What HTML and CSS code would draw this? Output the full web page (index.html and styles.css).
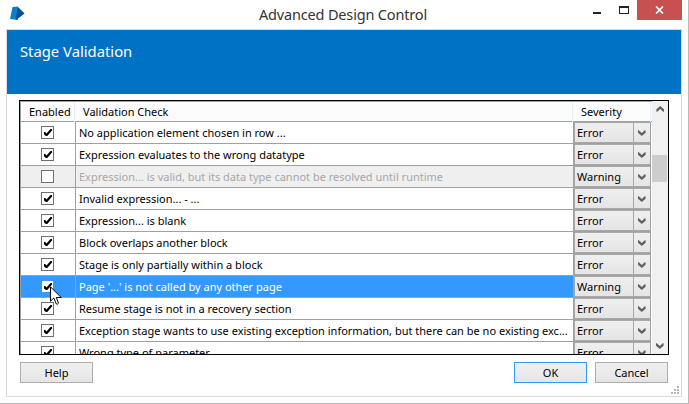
FILE: index.html
```
<!DOCTYPE html>
<html lang="en">
<head>
<meta charset="utf-8">
<title>Advanced Design Control</title>
<link rel="stylesheet" href="styles.css">
</head>
<body>
<svg class="defs" width="0" height="0">
  <symbol id="tick" viewBox="0 0 13 13"><path d="M3 6h1.200L5.500 7.600 9.500 3H11v1.500L6.300 10H5L3 8.500z" fill="#000"/></symbol>
  <symbol id="chev" viewBox="0 0 8 6"><path d="M0 .3v2.400L3.800 6 7.600 2.700V.3H6.800L3.800 3 .8.300z" fill="#606060"/></symbol>
</svg>
<div class="window">
  <header class="titlebar">
    <svg class="logo" width="16" height="16" viewBox="0 0 16 16"><path d="M3.500 1 8.500.500 9 14 1 13z" fill="#0c7fc9"/><path d="M8.500.500 15.500 7.500 7 14z" fill="#064f96"/></svg>
    <h1>Advanced Design Control</h1>
    <svg class="controls" width="50" height="20" viewBox="0 0 50 20"><path d="M4 12h8v2H4z" fill="#222"/><path d="M30 6h10v8H30zM31 8v5h8V8z" fill="#222" fill-rule="evenodd"/></svg>
    <div class="close"><svg width="9" height="8" viewBox="0 0 9 8"><path d="M1 .5 8 7.500M8 .5 1 7.500" stroke="#fff" stroke-width="1.700"/></svg></div>
  </header>
  <main class="panel">
    <div class="banner"><h2>Stage Validation</h2></div>
    <section class="grid">
      <div class="table">
        <div class="head"><span>Enabled</span><span>Validation Check</span><span>Severity</span></div>
        <div id="rows"></div>
      </div>
      <div class="scroll">
        <svg class="up" width="8" height="6"><use href="#chev"/></svg>
        <div class="thumb"></div>
        <svg class="down" width="8" height="6"><use href="#chev"/></svg>
      </div>
    </section>
    <footer class="actions">
      <button>Help</button><button class="ok">OK</button><button>Cancel</button>
    </footer>
    <svg class="grip" width="8" height="8" viewBox="0 0 8 8"><path d="M6 0h2v2H6zM3 3h2v2H3zM6 3h2v2H6zM0 6h2v2H0zM3 6h2v2H3zM6 6h2v2H6z" fill="#b8b8b8"/></svg>
  </main>
  <svg class="cursor" width="13" height="20" viewBox="0 0 13 20"><path d="M.5.800v14.400l3.300-3.200 2.400 5.800q1 1.200 2.300-.6L6.300 11.500h4.900z" fill="#fff" stroke="#000"/></svg>
</div>
<script src="rows.js"></script>
</body>
</html>
```
FILE: styles.css
```
* { box-sizing: border-box; }
body { margin: 0; background: #fff; font-family: "Noto Sans", sans-serif; font-size: 11px; color: #000; }
.defs { position: absolute; }
.window { position: relative; width: 689px; height: 404px; overflow: hidden; border-right: 1px solid #b9b9b9; border-bottom: 1px solid #b9b9b9; }
.titlebar { display: flex; height: 29px; padding-left: 9px; align-items: flex-start; }
.logo { margin-top: 6px; }
h1, h2 { margin: 0; font-weight: 400; white-space: nowrap; }
h1 { width: 169px; margin-left: 234px; margin-top: 4px; font-size: 14.500px; letter-spacing: -.17px; line-height: 21px; color: #333; }
.controls { margin-left: 161px; }
.close { width: 45px; height: 20px; margin-left: -2px; background: #c75050; display: flex; align-items: center; justify-content: center; }
.panel { position: relative; margin-left: 6px; width: 676px; height: 368px; border: 1px solid #d9d9d9; }
.banner { height: 64px; background: #0072c6; padding: 11px 13px; color: #fff; }
h2 { font-size: 14.800px; line-height: 21px; }
.grid { display: flex; width: 650px; height: 255px; margin: 6px 0 0 12px; border: 1px solid #000; overflow: hidden; }
.table { width: 632px; border-left: 1px solid #a0a0a0; border-top: 1px solid #a0a0a0; }
.head { display: grid; grid-template-columns: 54px 498px 78px; height: 20px; background: #fcfcfc; border-bottom: 1px solid #a0a0a0; line-height: 20px; }
.head span { padding-left: 8px; border-right: 1px solid #e2ecfa; white-space: nowrap; }
.row { display: grid; grid-template-columns: 55px 498px 77px; height: 22px; line-height: 21px; }
.row > div { border-right: 1px solid #a0a0a0; border-bottom: 1px solid #a0a0a0; white-space: nowrap; }
.check { padding: 4px 0 0 20px; }
.box { display: block; width: 13px; height: 13px; border: 1px solid #707070; background: #fff; }
.box svg { display: block; margin: -1px; }
.label { padding-left: 3px; }
.label span, .value span { display: inline-block; white-space: nowrap; }
.off > div { background: #efefef; color: #a7a7a7; }
.selected > div { background: #3399ff; color: #fff; }
.selected .box { border-color: #3399ff; }
.row .severity { padding: 1px 0 0 1px; background: #a8a8a8; color: #000; border-right: 1px solid #a0a0a0; }
.combo { display: flex; height: 19px; background: linear-gradient(#efefef, #e5e5e5); line-height: 20px; }
.value { width: 59px; padding-left: 2px; border-right: 1px solid #a8a8a8; }
.arrow { padding: 7px 0 0 4px; line-height: 0; }
.scroll { width: 16px; background: #f0f0f0; height: 253px; display: flex; flex-direction: column; align-items: flex-start; }
.up { transform: rotate(180deg); margin: 5px 0 0 4px; }
.thumb { width: 15px; height: 27px; background: #cdcdcd; margin-top: 43px; }
.down { margin: auto 0 5px 4px; }
.actions { display: flex; padding: 7px 13px 0 13px; }
button { width: 73px; height: 21px; padding: 0; border: 1px solid #acacac; background: linear-gradient(#f0f0f0, #e5e5e5); font: 11px "Noto Sans", sans-serif; color: #000; }
.actions .ok { margin: 0 8px 0 auto; border-color: #3399ff; }
.grip { position: absolute; right: 2px; bottom: 2px; }
.cursor { position: absolute; left: 50px; top: 286px; }
```
FILE: rows.js
```
const rows = [
  ["No application element chosen in row ...", "Error"],
  ["Expression evaluates to the wrong datatype", "Error"],
  ["Expression... is valid, but its data type cannot be resolved until runtime", "Warning", "off"],
  ["Invalid expression... - ...", "Error"],
  ["Expression... is blank", "Error"],
  ["Block overlaps another block", "Error"],
  ["Stage is only partially within a block", "Error"],
  ["Page '...' is not called by any other page", "Warning", "selected"],
  ["Resume stage is not in a recovery section", "Error"],
  ["Exception stage wants to use existing exception information, but there can be no existing exc...", "Error"],
  ["Wrong type of parameter", "Error"]
];
document.getElementById("rows").innerHTML = rows.map(([text, severity, state = ""]) => `
  <div class="row ${state}">
    <div class="check"><span class="box">${state === "off" ? "" : '<svg width="13" height="13"><use href="#tick"/></svg>'}</span></div>
    <div class="label"><span>${text}</span></div>
    <div class="severity"><div class="combo"><div class="value"><span>${severity}</span></div><div class="arrow"><svg width="8" height="6"><use href="#chev"/></svg></div></div></div>
  </div>`).join("");
```
